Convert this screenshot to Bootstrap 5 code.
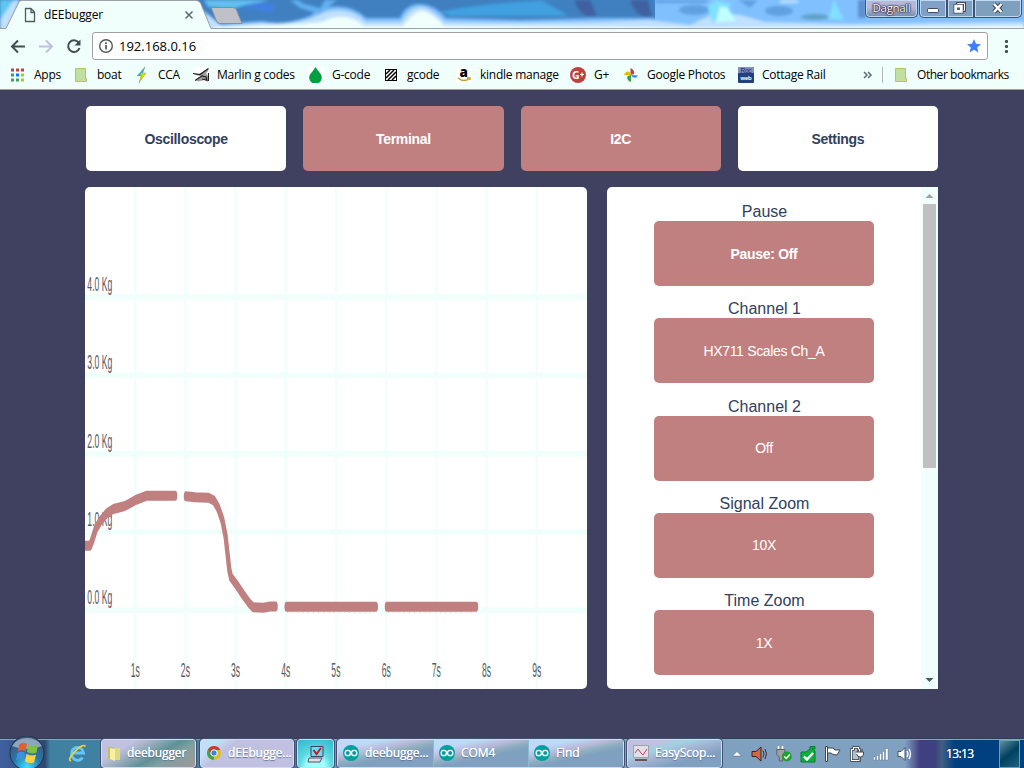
<!DOCTYPE html>
<html lang="en">
<head>
<meta charset="utf-8">
<meta name="viewport" content="width=device-width, initial-scale=1">
<title>dEEbugger</title>
<link href="https://cdn.jsdelivr.net/npm/bootstrap@5.3.0/dist/css/bootstrap.min.css" rel="stylesheet">
<style>
:root{--mint:#f0fffc;--ink:#404060;--rose:#c08080;--ui:"Open Sans","Noto Sans",sans-serif}
body{width:1024px;height:768px;overflow:hidden;background:var(--ink);font-family:var(--ui);font-size:12px;line-height:16px;color:#000}
svg{display:block;flex:none}
.titlebar{height:29px}
.titlebar .sky{position:absolute;left:0;top:0}
.tab-text{position:absolute;left:44px;top:7px;letter-spacing:-.1px}
.win-buttons{position:absolute;right:2px;top:0;height:18px}
.win-buttons>div{border:1px solid #405070;border-top:0;box-shadow:inset 0 0 0 1px #c0d8f0;height:18px}
.user-btn{width:53px;margin-right:1px;background:linear-gradient(#b8b8d8 0 45%,#7088a8);color:#fff;text-shadow:0 0 2px #202040,0 0 2px #202040,0 0 1px #202040,0 0 1px #202040;border-radius:0 0 5px 5px;font-size:11.5px;letter-spacing:-.35px}
.w-min{width:28px;background:#80a0c8;border-radius:0 0 0 5px}
.w-max{width:27px;background:#80a0c0}
.w-close{width:48px;background:#7f9fbf;border-radius:0 0 5px 0}
.toolbar{height:33px;background:var(--mint);padding-left:10px}
.urlbox{width:896px;height:28px;background:#fff;border:1px solid #a0a0a0;border-radius:3px;font-size:13px;padding:0 6px 0 5px;margin-left:10px}
.urlbox span{padding-left:1px;padding-top:1px}
.bookmarks{height:28px;background:var(--mint);border-bottom:1px solid #a0a0a0;display:grid;grid-template-columns:63px 61px 59px 115px 75px 73px 114px 53px 115px 123px 21px 11px auto;padding-left:10px;padding-bottom:2px;align-items:center;white-space:nowrap;letter-spacing:-.25px}
.bookmarks>div{display:flex;gap:8px;align-items:center}
.bookmarks>div:last-child{letter-spacing:-.45px}
.page{font-family:"Liberation Sans",Arial,sans-serif;padding:16px 86px 0 85px;height:648px}
.tabs-row{gap:17px;margin-left:1px;height:65px}
.scope-btn{border:0;border-radius:5px;background:var(--rose);color:#fff;font-size:14px;letter-spacing:-.32px;line-height:20px;padding:0}
.scope-btn.on{background:#fff;color:#304060}
.panes{margin-top:16px;gap:20px}
.plot{width:502px;height:502px;border-radius:5px;background:#fff;overflow:hidden}
.controls{width:331px;height:502px;border-radius:5px 0 0 5px;background:#fff;overflow:hidden}
.fields{padding-top:16px;gap:14.3px}
.fields label{font-size:16px;line-height:18px;color:#304060;padding-left:1px}
.fields .scope-btn{width:220px;height:65px}
.sbar{width:17px;background:var(--mint)}
.sthumb{width:13px;height:264px;background:#c0c0c0}
.taskbar{height:30px;color:#fff;background:linear-gradient(90deg,#4060a0 0,#304870 45px,#4080a0 50px,#4080a0 300px,#80a0c0 345px,#80a0c0 905px,#404080 920px,#404080 935px,#406080 942px,#004080 955px,#004080 1000px);border-top:1px solid #304050;box-shadow:inset 0 1px #80a8c0;letter-spacing:-.1px}
.task{height:29px;border:1px solid #d8d8f0;border-radius:3px;outline:1px solid #405070;outline-offset:0;white-space:nowrap;text-shadow:0 0 .6px #fff,0 1px 1px #607090}
.task .cell{height:100%;width:96px;gap:6px;padding-left:5px;padding-bottom:1px}
.t-dir{width:95px;margin-left:10px;background:linear-gradient(150deg,#c0c0e0 0 25%,#a0b0c0 38%,#609098 58%,#80a0a0 70%,#a09898)}
.t-chrome{width:94px;margin-left:4px;background:linear-gradient(140deg,#c0e0f8 0 15%,#c0c0e0 30%)}
.t-mon{width:37px;margin-left:3px;background:radial-gradient(circle at 50% 100%,#a0ffff 0 28%,#60d8e0 50%,#30b8d0)}
.t-ard{width:287px;margin-left:3px}
.t-ard .cell{background:linear-gradient(168deg,#c0d8f8 0 20%,#b8b8d8 38%,#90b0c0 48%,#80a0c0 60%)}
.t-ard .cell+.cell{border-left:1px solid #90b8d0}
.t-easy{width:95px;margin-left:3px;background:linear-gradient(165deg,#c0c0e0 0 20%,#a0d0e0 34%,#a8b8d8 45%,#80a0c0 70%)}
.tray{gap:8px;margin-left:9px}
.tray>*+*{margin-left:.05px}
.clock{margin-left:31px;width:53px;letter-spacing:-.6px;text-shadow:0 0 .6px #fff}
.peek{width:21px;height:28px;background:linear-gradient(140deg,#6090a0,#004060 50%,#206080);border:1px solid #70a0b0}
</style>
</head>
<body class="d-flex flex-column">
<header>
  <div class="titlebar position-relative">
    <svg class="sky" width="1024" height="29" viewBox="0 0 1024 29">
      <defs><filter id="soft" x="-5%" y="-50%" width="110%" height="200%"><feGaussianBlur stdDeviation="1.6"/></filter></defs>
      <rect width="1024" height="29" fill="#4080c0"/>
      <rect x="655" width="369" height="29" fill="#80c0ff"/>
      <g filter="url(#soft)">
        <path d="M0 0H14L6 22 0 27Z" fill="#60c8f0"/><path d="M14 0h6L8 30H0V20Z" fill="#c0e0ff"/>
        <path d="M200 8L220 24 262 21Q285 26 310 16L318 10Q348 0 366 18L400 18Q406 4 420 4T446 18L520 20 600 18 650 18 690 22 710 14 740 14 765 20 850 22 1024 18V34H210Z" fill="#80c0ff"/>
        <path d="M205 12L222 26 262 23Q285 26 312 18L325 12Q350 6 366 22L401 22Q410 7 420 7T445 22L520 23 600 22 650 20 690 25 715 13 740 15 765 22 850 24 1024 22V34H210Z" fill="#c0e0ff"/>
        <path d="M215 27L300 24 322 22Q345 10 364 26L403 26Q414 11 422 11T444 26L640 27 700 28 1024 26V32H215Z" fill="#f0fffc"/>
        <path d="M440 12Q500 0 575 0H540Q560 10 568 16H450Z" fill="#40a0e0"/>
        <path d="M575 0H590L597 16H586Q576 10 575 0ZM630 0H648L652 17H644Q633 12 630 0Z" fill="#4060a0"/>
        <ellipse cx="694" cy="10" rx="15" ry="5" fill="#60a0e0"/><ellipse cx="779" cy="11" rx="14" ry="5" fill="#60a0e0"/><ellipse cx="815" cy="17" rx="14" ry="3" fill="#60a0c8"/>
        <path d="M655 0h55l-5 3h-50ZM738 0h20l-8 8Z" fill="#60a0e0"/><path d="M828 19L834 0 844 20Z" fill="#80e0ff"/><path d="M708 6L716 0 732 4 724 14 712 23Z" fill="#80e0ff"/><path d="M716 22L720 6 728 8 736 21Z" fill="#c0ffff"/>
        <path d="M780 0h18v3h-18Z" fill="#c0e0ff"/><path d="M858 0h8v18h-8Z" fill="#6090d0"/>
        <path d="M238 6l15-5 25 4-8 8Z" fill="#4080e0"/><path d="M204 0h66l-25 5-12 4-25-2Z" fill="#60c0f0"/><path d="M290 0l10 8 20 6 12-10 5-4h-12l-5 8-16-4-6-4Z" fill="#60b0f0"/>
      </g>
      <path d="M0 28.500H6L19 2Q20 .5 22 .5H196Q199 .5 200.500 3L211 28.500H1024V29H0Z" fill="#f0fffc"/>
      <path d="M0 28.500H6L19 2Q20 .5 22 .5H196Q199 .5 200.500 3L211 28.500H1024" fill="none" stroke="#a0a0a8"/>
      <path d="M211 7.500H233Q235.500 7.500 236.500 10L242 23.500H220Q217.500 23.500 216.500 21Z" fill="#c0c0c8" stroke="#8090a8"/>
      <path d="M25.500 8.500H31L34.500 12V21.500H25.500ZM31 8.500V12.500H34.500" fill="none" stroke="#505c5c" stroke-width="1.300"/>
      <path d="M185.500 11.500L192.500 18.500M192.500 11.500L185.500 18.500" stroke="#606870" stroke-width="1.500"/>
    </svg>
    <span class="tab-text">dEEbugger</span>
    <div class="win-buttons d-flex">
      <div class="user-btn text-center">Dagnall</div>
      <div class="w-min"><svg width="26" height="17"><rect x="7.500" y="8.500" width="11" height="4" rx="1" fill="#fff" stroke="#404860"/></svg></div>
      <div class="w-max"><svg width="26" height="17"><path d="M9.500 3.500h7v7h-7z" fill="none" stroke="#404860" stroke-width="3"/><path d="M9.500 3.500h7v7h-7z" fill="none" stroke="#fff"/><path d="M7 5.500h7v6.500H7z" fill="#506080" stroke="#404860" stroke-width="3"/><path d="M7 5.500h7v6.500H7z" fill="#fff" stroke="#fff" stroke-width="1.500"/><path d="M9 7.500h3v2.500H9z" fill="#506080"/></svg></div>
      <div class="w-close"><svg width="46" height="17"><path d="M19 4L26.500 12M26.500 4L19 12" stroke="#404860" stroke-width="4.500"/><path d="M19 4L26.500 12M26.500 4L19 12" stroke="#fff" stroke-width="2.500"/></svg></div>
    </div>
  </div>

  <div class="toolbar d-flex align-items-center">
    <svg width="72" height="28" fill="none" stroke="#405050" stroke-width="2"><path d="M15 14.500H2M8 8.500L2 14.500 8 20.500"/><path d="M29 14.500H42M36 8.500L42 14.500 36 20.500" stroke="#c0c0e0"/><path d="M68.500 10.500A5.800 5.800 0 1 0 69.500 16"/><path d="M70.500 7.500V13.500H64.500Z" fill="#405050" stroke="none"/></svg>
    <div class="urlbox d-flex align-items-center">
      <svg width="16" height="16" fill="none" stroke="#505858" stroke-width="1.400"><circle cx="8" cy="8" r="6.300"/><path d="M8 7V11.500M8 4.300V5.900" stroke-width="1.700"/></svg>
      <span class="ms-1 flex-grow-1">192.168.0.16</span>
      <svg width="14" height="14" viewBox="0 0 14 14"><path d="M7 0L9 4.800 14 5.200 10.200 8.500 11.400 13.500 7 10.800 2.600 13.500 3.800 8.500 0 5.200 5 4.800Z" fill="#4080ff"/></svg>
    </div>
    <svg width="36" height="20" fill="#405050"><rect x="17" y="4" width="3" height="3" rx="1"/><rect x="17" y="9" width="3" height="3" rx="1"/><rect x="17" y="14" width="3" height="3" rx="1"/></svg>
  </div>

  <nav class="bookmarks">
    <div><svg width="16" height="16"><path d="M1 1.500h3v3H1zM6 1.500h3v3H6zM11 1.500h3v3h-3z" fill="#c04040"/><path d="M1 6.500h3v3H1zM1 11.500h3v3H1zM6 11.500h3v3H6z" fill="#40a060"/><path d="M6 6.500h3v3H6z" fill="#0080ff"/><path d="M11 6.500h3v3h-3zM11 11.500h3v3h-3z" fill="#c0c020"/></svg>Apps</div>
    <div><svg width="16" height="16"><path d="M2.500 1.500h10v10h1v3h-11z" fill="#c0e0a0" stroke="#c0c060"/></svg>boat</div>
    <div><svg width="16" height="16"><path d="M11 0L3 9H8Z" fill="#20b0e0"/><path d="M12 6H7L5 16Z" fill="#e0e000"/><path d="M11 0L3 9 8 8 5 16 12 6 8 6Z" fill="none" stroke="#80a060" stroke-width=".5"/></svg>CCA</div>
    <div><svg width="16" height="16"><rect width="16" height="16" fill="#fff"/><path d="M0 6.500L6 7 11 4 15.500 1.500 15 4 13 6 15.500 10 15 15 12 13 5 14.500 3 13.500 9 9 4 8.500Z" fill="#a0a0a0"/><path d="M0 6.500L7 7.500 12 4 15.500 1.500M2 13.500L9 9 13 10 14 14M15.500 6V14M9 12l4 1" stroke="#202020" stroke-width="1.200" fill="none"/></svg>Marlin g codes</div>
    <div><svg width="16" height="16"><rect width="16" height="16" fill="#fff"/><path d="M7.500 0Q11 5 13 7.500A6.300 6.300 0 1 1 2 7.500Q5 4 7.500 0Z" fill="#00a040"/></svg>G-code</div>
    <div><svg width="16" height="16"><rect x="2.500" y="2.500" width="11" height="11" fill="#fff" stroke="#000"/><path d="M3 7L7 3M3 11L11 3M5 13L13 5M9 13L13 9" stroke="#000" stroke-width="1.500"/></svg>gcode</div>
    <div><svg width="16" height="16" overflow="visible"><rect width="16" height="16" fill="#fff"/><text x="3.500" y="10" font-family="Open Sans" font-weight="800" font-size="13.500">a</text><path d="M2 11Q8 16 14 11M11 11h3v2" fill="none" stroke="#c0a020" stroke-width="1.300"/></svg>kindle manage</div>
    <div><svg width="16" height="16"><circle cx="8" cy="8" r="8" fill="#c04040"/><text x="2" y="12" font-family="Open Sans" font-weight="700" font-size="10.500" fill="#fff">G</text><path d="M10 7.500h4M12 5.500v4" stroke="#fff" stroke-width="1.200"/></svg>G+</div>
    <div><svg width="16" height="16"><path d="M7.500 8V1Q12 3 11 7Z" fill="#c04040"/><path d="M8 8L15 8.500Q13 12 9.500 10Z" fill="#4080ff"/><path d="M8 8V15Q3 13 4.500 9Z" fill="#40a040"/><path d="M7.500 8H1Q3 3 6.500 5Z" fill="#e0c000"/></svg>Google Photos</div>
    <div><svg width="16" height="16" overflow="visible"><rect width="16" height="16" rx="1" fill="#204080"/><rect width="16" height="6" fill="#8090c0"/><text x="2.500" y="6" font-size="6.500" font-family="Liberation Sans" fill="#202060">Roc</text><text x="2.500" y="12.500" font-size="6" font-weight="700" font-family="Liberation Sans" fill="#fff">web</text></svg>Cottage Rail</div>
    <div><svg width="12" height="12" fill="none" stroke="#606870" stroke-width="1.500"><path d="M3 3l3 3-3 3M7 3l3 3-3 3"/></svg></div>
    <div><svg width="2" height="16"><path d="M.5 0V16" stroke="#b0b8b8"/></svg></div>
    <div><svg width="16" height="16"><path d="M2.500 1.500h10v10h1v3h-11z" fill="#c0e0a0" stroke="#c0c060"/></svg>Other bookmarks</div>
  </nav>
</header>

<main class="page">
  <div class="tabs-row d-flex">
    <button class="scope-btn on fw-bold flex-fill w-25">Oscilloscope</button>
    <button class="scope-btn fw-bold flex-fill w-25">Terminal</button>
    <button class="scope-btn fw-bold flex-fill w-25">I2C</button>
    <button class="scope-btn on fw-bold flex-fill w-25">Settings</button>
  </div>
  <div class="panes d-flex">
    <div class="plot">
      <svg width="502" height="502" viewBox="0 0 502 502">
        <path d="M50.200 0V502M100.400 0V502M150.600 0V502M200.800 0V502M251 0V502M301.200 0V502M351.400 0V502M401.600 0V502M451.800 0V502" stroke="#f0fffc" stroke-width="2.400"/>
        <path d="M0 110H502M0 188.300H502M0 266.700H502M0 345H502M0 423.400H502" stroke="#f0fffc" stroke-width="5.600"/>
        <g transform="scale(.43 1)" font-family="Liberation Sans" font-size="20" fill="#585860">
          <text x="5.500" y="104">4.0 Kg</text><text x="5.500" y="182.500">3.0 Kg</text><text x="5.500" y="261">2.0 Kg</text><text x="5.500" y="339">1.0 Kg</text><text x="5.500" y="417.500">0.0 Kg</text>
          <g text-anchor="middle"><text x="117" y="490.500">1s</text><text x="233.500" y="490.500">2s</text><text x="350" y="490.500">3s</text><text x="467" y="490.500">4s</text><text x="583.500" y="490.500">5s</text><text x="700.500" y="490.500">6s</text><text x="817" y="490.500">7s</text><text x="934" y="490.500">8s</text><text x="1050.500" y="490.500">9s</text></g>
          <g fill="none" stroke="#c08080" stroke-width="10" stroke-linecap="round" stroke-linejoin="round">
            <path d="M-8 358.700H12L17 353 25.600 341.300 36.400 333.700 50.400 326.300 65.900 322 93 319 116.300 313.300 143.400 308.700H209.700"/>
            <path d="M234.700 309.300L255.800 310.300 286.800 310.700 300 313.700 310 321.300 319.400 333 327.100 349.700 335.700 383 339.500 390.300 352.700 398 368.200 408 382.200 416.300 391.500 420.300 414.700 420.700 430 419.600H443.300"/>
            <path d="M468.800 419.800H676.400M702.100 419.800H909.500"/>
          </g>
          <path d="M470 425.200H674M705 425.200H908" stroke="#e0a0c0" stroke-width="1" stroke-dasharray="3 9"/>
        </g>
      </svg>
    </div>
    <div class="controls d-flex">
      <div class="fields d-flex flex-column flex-grow-1">
        <div class="d-flex flex-column align-items-center"><label>Pause</label><button class="scope-btn fw-bold">Pause: Off</button></div>
        <div class="d-flex flex-column align-items-center"><label>Channel 1</label><button class="scope-btn">HX711 Scales Ch_A</button></div>
        <div class="d-flex flex-column align-items-center"><label>Channel 2</label><button class="scope-btn">Off</button></div>
        <div class="d-flex flex-column align-items-center"><label>Signal Zoom</label><button class="scope-btn">10X</button></div>
        <div class="d-flex flex-column align-items-center"><label>Time Zoom</label><button class="scope-btn">1X</button></div>
      </div>
      <div class="sbar d-flex flex-column align-items-center">
        <svg width="17" height="17"><path d="M4.500 11L8.500 7 12.500 11Z" fill="#a0a0a0"/></svg>
        <div class="sthumb"></div>
        <svg class="mt-auto" width="17" height="17"><path d="M4.500 6L8.500 10 12.500 6Z" fill="#406060"/></svg>
      </div>
    </div>
  </div>
</main>

<footer class="taskbar d-flex align-items-center">
  <svg width="91" height="36" viewBox="0 0 91 36">
    <defs><radialGradient id="orb" cx=".5" cy=".9" r=".8"><stop offset="0" stop-color="#40e0ff"/><stop offset=".5" stop-color="#2878a8"/><stop offset="1" stop-color="#405878"/></radialGradient></defs>
    <circle cx="27" cy="17" r="17" fill="url(#orb)" stroke="#203050"/><path d="M12 10A17 15 0 0 1 42 10Q27 16 12 10Z" fill="#c0d8e8" opacity=".6"/>
    <path d="M19 8.500Q23 5.500 27 8L25.500 15.500Q22 13 18 15.500Z" fill="#e06030"/><path d="M28.500 8.500Q33 11.500 38 8.500L36.500 16.500Q32 18.500 27 16Z" fill="#80c040"/><path d="M17.500 17Q21 14.500 25 17L23.500 24.500Q20 22 16 24.500Z" fill="#4090e0"/><path d="M26.500 18Q31 20.500 36 18.500L34 26.500Q29 28 25 25.500Z" fill="#ffd040"/>
    <path d="M73 17H83.500A6 6.500 0 1 0 82.500 21.500" fill="none" stroke="#60c8ff" stroke-width="2.800"/><path d="M71 25Q67 24 75 15.500T85.500 10.500" fill="none" stroke="#ffd020" stroke-width="1.600"/>
  </svg>
  <div class="task t-dir"><div class="cell d-flex align-items-center"><svg width="14" height="17"><path d="M1 2h6v12H1z" fill="#c0c060"/><path d="M3 3l5 1v12l-5-2Z" fill="#f8f0a0"/><path d="M8 3h5v12H8z" fill="#e0d880"/></svg>deebugger</div></div>
  <div class="task t-chrome"><div class="cell d-flex align-items-center"><svg width="16" height="16" viewBox="0 0 16 16"><circle cx="8" cy="8" r="7" fill="#e0c020"/><path d="M2 4.500A7 7 0 0 1 14.300 5H8L5 9.500Z" fill="#c04030"/><path d="M2 4.500L5 9.500 8.500 11 7.500 15A7 7 0 0 1 2 4.500Z" fill="#40a050"/><circle cx="8" cy="8" r="3.200" fill="#4080e0" stroke="#fff"/></svg>dEEbugge...</div></div>
  <div class="task t-mon d-flex align-items-center justify-content-center"><svg width="18" height="18"><path d="M4 1.500h12v10H4z" fill="#60e0f0" stroke="#404060"/><path d="M6.500 5l3 4L14 3" fill="none" stroke="#c02020" stroke-width="2"/><path d="M2 13h13l-2 4H1z" fill="#e0e0e0" stroke="#505070"/></svg></div>
  <div class="task t-ard d-flex">
    <div class="cell d-flex align-items-center"><svg width="16" height="16"><circle cx="8" cy="8" r="8" fill="#00a0a0"/><g fill="none" stroke="#fff" stroke-width="1.300"><circle cx="4.800" cy="8" r="2.700"/><circle cx="11.200" cy="8" r="2.700"/></g></svg><span>deebugge...</span></div>
    <div class="cell d-flex align-items-center"><svg width="16" height="16"><circle cx="8" cy="8" r="8" fill="#00a0a0"/><g fill="none" stroke="#fff" stroke-width="1.300"><circle cx="4.800" cy="8" r="2.700"/><circle cx="11.200" cy="8" r="2.700"/></g></svg>COM4</div>
    <div class="cell d-flex align-items-center"><svg width="16" height="16"><circle cx="8" cy="8" r="8" fill="#00a0a0"/><g fill="none" stroke="#fff" stroke-width="1.300"><circle cx="4.800" cy="8" r="2.700"/><circle cx="11.200" cy="8" r="2.700"/></g></svg>Find</div>
  </div>
  <div class="task t-easy"><div class="cell d-flex align-items-center"><svg width="16" height="17"><rect x=".5" y=".5" width="15" height="12" fill="#e0e0e8" stroke="#a0a0a8"/><path d="M2 8L5 4 8 8 10 10 14 4" fill="none" stroke="#c04060"/><path d="M2 15h12" stroke="#705050" stroke-width="2"/></svg>EasyScop...</div></div>
  <div class="tray d-flex align-items-center">
    <svg width="12" height="8"><path d="M1.500 6L6 1.500 10.500 6Z" fill="#fff" stroke="#506080" stroke-width=".5"/></svg>
    <svg width="17" height="18"><path d="M1 6.500H5L10 2V16L5 11.500H1Z" fill="#d06840" stroke="#402020"/><path d="M12 5.500Q14 9 12 12.500M14 4Q17 9 14 14" fill="none" stroke="#502828"/></svg>
    <svg width="16" height="18"><path d="M2.500 1v3M6.500 1v3" stroke="#fff" stroke-width="1.500"/><path d="M.8 4.500h8v5l-2 2.500v4h-3.500v-4l-2.500-2.500Z" fill="#a0a0a8" stroke="#606070"/><circle cx="10.800" cy="11.500" r="5" fill="#20a030"/><path d="M8.300 11.500l2 2 3.500-4" stroke="#fff" stroke-width="1.500" fill="none"/></svg>
    <svg width="16" height="18"><path d="M1 7h5l4-3V1.500h5V4h-3l3 2V17H1Z" fill="#10b040" stroke="#008030"/><path d="M4 11.500l3 3 6-6.500" stroke="#fff" stroke-width="2.400" fill="none"/></svg>
    <svg width="17" height="18"><path d="M1.500 1.500h2v15h-2ZM3.500 3H9l2 2h5l-3 5-4-.5-2-1.500H3.500Z" fill="#fff" stroke="#404850"/></svg>
    <svg width="16" height="18"><path d="M2.500 4.500h2v-2h5v2h1v11h-8z" fill="#b0c0d0" stroke="#303840" stroke-width="2.500"/><path d="M2.500 4.500h2v-2h5v2h1v11h-8z" fill="none" stroke="#fff" stroke-width="1.200"/><path d="M6.500 7h8v2q0 3-3 3t-4-3M9 4v3M13 4v3M11 12v4" fill="#fff" stroke="#404850"/></svg>
    <svg width="16" height="18"><path d="M.5 12h2v3h-2zM3.500 10.500h2v4.500h-2zM6.500 8.500h2v6.500h-2zM9.500 6.500h2v8.500h-2zM12.500 3.500h2.500v11.500h-2.500z" fill="#fff" stroke="#506080" stroke-width=".4"/></svg>
    <svg width="16" height="18"><path d="M1 6.500H4L8 2.500V15.500L4 11.500H1Z" fill="#fff" stroke="#405060"/><path d="M10 6Q12 9 10 12M12 4Q15 9 12 14" fill="none" stroke="#fff" stroke-width="1.300"/></svg>
  </div>
  <span class="clock ms-auto">13:13</span>
  <div class="peek me-1"></div>
</footer>
<script src="https://cdn.jsdelivr.net/npm/bootstrap@5.3.0/dist/js/bootstrap.bundle.min.js"></script>
</body>
</html>
